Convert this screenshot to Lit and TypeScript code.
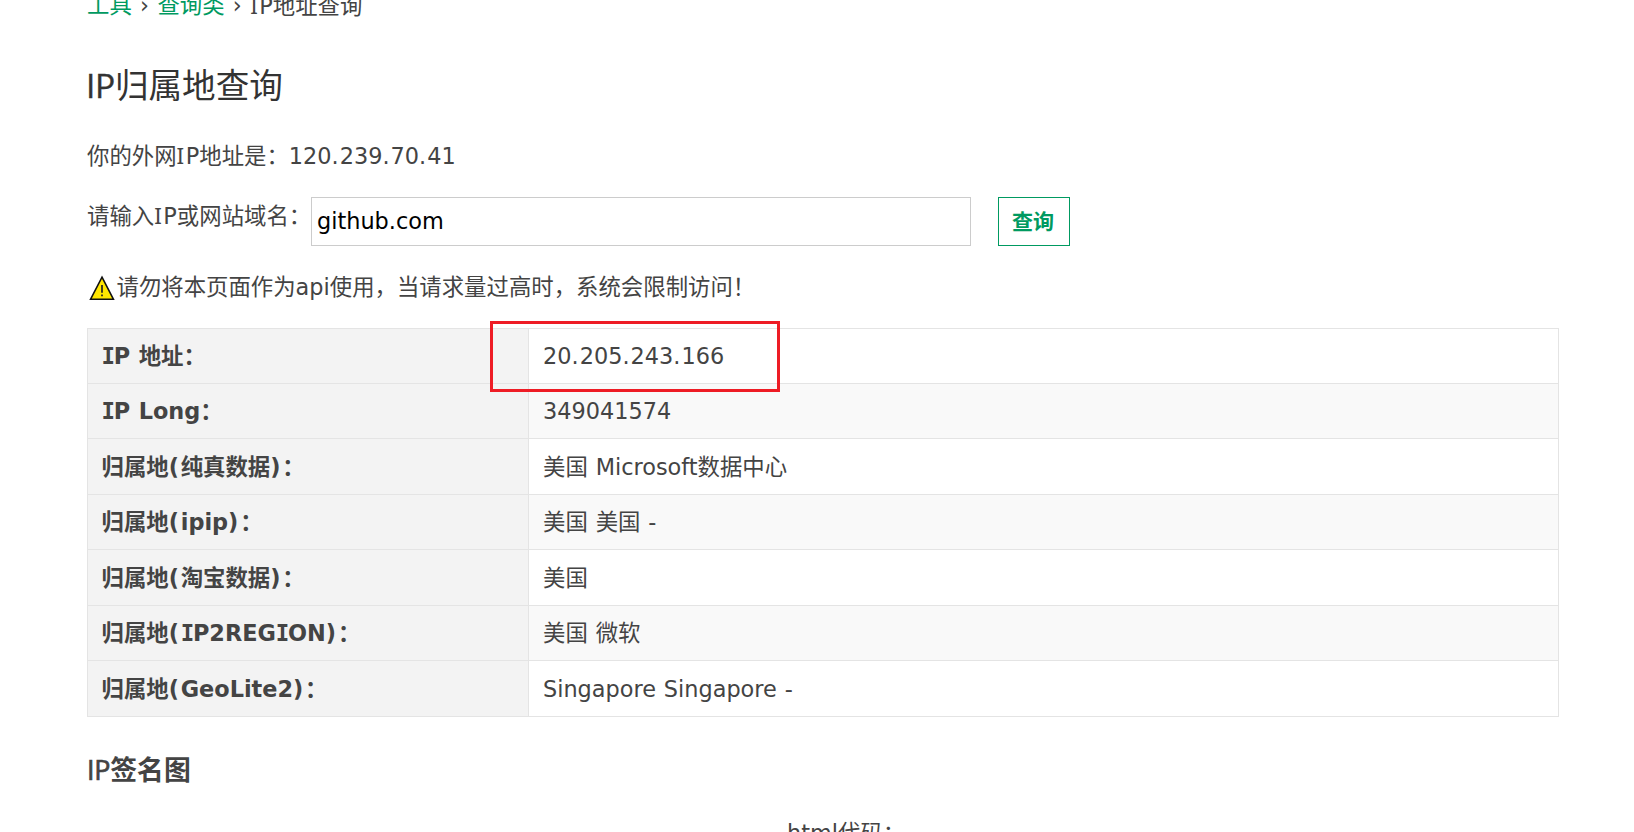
import { LitElement, html, css } from "lit";
import { customElement, property } from "lit/decorators.js";

// Gives capital I, full stops and parentheses the wider, Verdana-like setting.
const wide = (text: string) =>
  text.split(/([I.()])/).filter((p) => p).map((p) =>
    p === "I" ? html`<span class="cap">I</span>`
    : p === "." ? html`<span class="dot">.</span>`
    : p === "(" || p === ")" ? html`<span class="paren">${p}</span>` : p);

@customElement("result-table")
class ResultTable extends LitElement {
  @property({ attribute: false }) rows: [string, string][] = [];

  static styles = css`
    :host { display: block; position: relative; width: 1472px; box-sizing: border-box; border-bottom: 1px solid #e4e4e4; }
    .row { display: grid; grid-template-columns: 441px 1fr; grid-template-rows: 54.43px; height: 55.43px; box-sizing: border-box;
      border: 1px solid #e4e4e4; border-bottom: 0; line-height: 54.4px; background: #fff; }
    .row:nth-child(even) { background: #f9f9f9; }
    .label, .value { box-sizing: border-box; height: 54.43px; padding: 1.4px 0 0 14px; line-height: 53.8px; }
    .label { background: #f3f3f3; border-right: 1px solid #e4e4e4; font-weight: 700; padding-left: 13.5px; }
    .cap { font-family: "DejaVu Sans Mono"; letter-spacing: -0.056em; }
    .dot { letter-spacing: 0.046em; }
    .paren { letter-spacing: 0.08em; }
    .mark { position: absolute; left: 403px; top: -6.6px; width: 290px; height: 71px; box-sizing: border-box; border: 3px solid #ee1c25; }
  `;

  render() {
    return html`${this.rows.map(([label, value]) => html`
      <div class="row"><div class="label">${wide(label)}</div><div class="value">${wide(value)}</div></div>`)}
      <div class="mark"></div>`;
  }
}

@customElement("app-root")
class AppRoot extends LitElement {
  static styles = css`
    :host { display: block; height: 832px; overflow: hidden; background: #fff; color: #444;
      font: 22.4px "DejaVu Sans", "Noto Sans CJK SC", sans-serif; word-spacing: 0.034em; white-space: nowrap; }
    .page { display: flow-root; padding-left: 87px; }
    .cap { font-family: "Noto Sans"; letter-spacing: 0.07em; }
    .dot { letter-spacing: 0.046em; }
    .crumbs { display: flex; margin-top: -12px; height: 34px; line-height: 35px; }
    .link { color: #009a61; }
    .sep { width: 25.6px; text-align: center; }
    h1 { margin: 38px 0 28px -1px; font: 400 33.6px/50px "Open Sans", "Noto Sans CJK SC", sans-serif; height: 50px; color: #333; }
    .latin { letter-spacing: -0.01em; -webkit-text-stroke: 0.4px currentColor; }
    h2 .latin { font-weight: 400; letter-spacing: -0.01em; -webkit-text-stroke: 0.7px currentColor; }
    p { margin: 0; height: 36px; line-height: 36px; }
    .form { display: flex; height: 49px; margin: 23px 0; }
    .form label { width: 224px; line-height: 38px; }
    input { width: 660px; height: 49px; box-sizing: border-box; margin: 0; padding: 0 5px 2px; border: 1px solid #ccc;
      font: inherit; color: #000; background: #fff; border-radius: 0; outline: 0; }
    button { margin: 0 0 0 27px; padding: 0 2px 3px 0; width: 72px; height: 49px; box-sizing: border-box; border: 1px solid #009a61;
      background: #fff; color: #009a61; font: 700 21px "Noto Sans CJK SC", sans-serif; }
    .warn { display: flex; }
    .warn svg { width: 26px; height: 26px; margin: 6px 1.5px 0 2px; }
    result-table { margin-top: 22.6px; }
    h2 { margin: 34.4px 0 26px; font: 700 26.88px/38px "Open Sans", "Noto Sans CJK SC", sans-serif; }
    .code { padding-left: 700px; }
  `;

  private rows: [string, string][] = [
    ["IP 地址：", "20.205.243.166"],
    ["IP Long：", "349041574"],
    ["归属地(纯真数据)：", "美国 Microsoft数据中心"],
    ["归属地(ipip)：", "美国 美国 -"],
    ["归属地(淘宝数据)：", "美国"],
    ["归属地(IP2REGION)：", "美国 微软"],
    ["归属地(GeoLite2)：", "Singapore Singapore -"],
  ];

  render() {
    return html`<div class="page">
      <nav class="crumbs"><span class="link">工具</span><span class="sep">›</span><span class="link">查询类</span><span class="sep">›</span><span>${wide("IP地址查询")}</span></nav>
      <h1><span class="latin">IP</span>归属地查询</h1>
      <p>${wide("你的外网IP地址是：120.239.70.41")}</p>
      <div class="form"><label>${wide("请输入IP或网站域名：")}</label><input value="github.com" /><button>查询</button></div>
      <p class="warn"><svg viewBox="0 0 26 26"><path d="M13 2.2 L24.4 24.2 H1.6 Z" fill="#ffe600" stroke="#111" stroke-width="1.6"/><path d="M13 10v7.8M13 19.6v1.6" stroke="#222" stroke-width="1.7"/></svg><span>请勿将本页面作为api使用，当请求量过高时，系统会限制访问！</span></p>
      <result-table .rows=${this.rows}></result-table>
      <h2><span class="latin">IP</span>签名图</h2>
      <p class="code">html代码：</p>
    </div>`;
  }
}
